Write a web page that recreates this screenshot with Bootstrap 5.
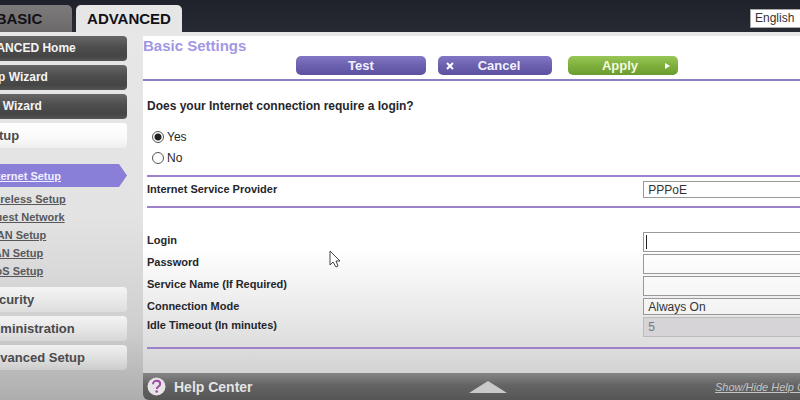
<!DOCTYPE html>
<html lang="en">
<head>
<meta charset="utf-8">
<meta name="viewport" content="width=device-width, initial-scale=1">
<title>Basic Settings</title>
<link href="https://cdn.jsdelivr.net/npm/bootstrap@5.3.0/dist/css/bootstrap.min.css" rel="stylesheet">
<style>
body { font-family: "Liberation Sans", Arial, sans-serif; font-size: 12px; line-height: 16px; color: #26262b; background: #e6e6e7; overflow: hidden; }
.topbar { height: 32px; background: linear-gradient(#20222b, #272a32); }
.toptab { height: 27px; font-size: 15px; font-weight: 700; line-height: 27px; color: #111116; text-decoration: none; border-radius: 5px 5px 0 0; text-align: center; }
.tab-basic { width: 120px; margin-left: -48px; padding-left: 14px; background: linear-gradient(#7c7a7b, #6b696a); }
.tab-advanced { width: 106px; background: #e6e6e7; }
.language { width: 50px; height: 19px; font-size: 12px; line-height: 16px; padding: 0 4px; border: 1px solid #aaa; border-right: 0; border-radius: 0; appearance: none; background: #fff; color: #333; }
.shell { background: linear-gradient(#e8e7e8 0, #e3e3e3 50%, #cfcfd0 80%, #adadae 100%); }
.side { width: 183px; margin-left: -40px; padding-right: 16px; }
.menu-btn { height: 25px; border: 0; border-radius: 0 4px 4px 0; font-size: 13px; font-weight: 700; line-height: 25px; text-align: left; padding: 0 12px; }
.menu-dark { font-size: 12px; color: #f4f4f4; background: linear-gradient(#686768, #4e4d4e 45%, #464546 80%, #555); }
.menu-light { color: #4a4a4c; background: linear-gradient(rgba(255,255,255,.75), rgba(255,255,255,.45) 60%, rgba(255,255,255,.25)); padding-left: 23px; }
.menu-open { background: linear-gradient(#fff, #fafafa 60%, #eee); }
.submenu { font-size: 11px; font-weight: 700; line-height: 18px; padding: 12px 0 3px; }
.submenu a { color: #58585a; padding-left: 27px; }
.submenu .current { color: #f0eeff; height: 23px; line-height: 24px; margin-bottom: 3px; background: #897fd8; clip-path: polygon(0 0, calc(100% - 8px) 0, 100% 50%, calc(100% - 8px) 100%, 0 100%); }
.panel { background: linear-gradient(#fff 0, #fff 63%, #efefef 77%, #dcdcdd 93%, #d3d3d3 100%); }
.page-title { font-size: 15px; font-weight: 700; line-height: 20px; color: #a198e4; }
.actions { padding: 0 0 4px 153px; border-bottom: 2px solid #8c80c4; gap: 12px; }
.action { height: 19px; border: 0; border-radius: 5px; font-size: 13px; font-weight: 700; line-height: 19px; color: #f3f1ff; background: linear-gradient(#8177c4, #6b61af 50%, #5b519e); padding: 0 8px; }
.action-test { width: 130px; }
.action-cancel { width: 114px; }
.action-apply { width: 110px; color: #f1fae0; background: linear-gradient(#99c656, #7fb03d 50%, #6a9b31); }
.question { font-size: 12px; font-weight: 700; line-height: 16px; margin-bottom: 12px; }
.choices { padding: 17px 0 7px; }
.choice { height: 21px; gap: 3px; padding-left: 5px; }
.choice input { appearance: none; width: 12px; height: 12px; margin: 0; border: 1px solid #555; border-radius: 50%; background: #fff; }
.choice input:checked { background: radial-gradient(circle, #222 0 3px, #fff 4px); }
.ruled { border-top: 2px solid #9c82cc; }
.settings { padding: 24px 0 10px; row-gap: 2px; }
.field-label { width: 76%; font-size: 11px; font-weight: 700; line-height: 16px; }
.field { width: 24%; }
.box { width: 100%; height: 20px; border: 1px solid #999; border-right: 0; border-radius: 0; padding: 0 4px; font-size: 12px; line-height: 14px; color: #333; background: rgba(255,255,255,.45); appearance: none; }
.box-select { height: 17px; }
.box:disabled { color: #77777a; background: #d6d4d6; border-color: #bbb; opacity: 1; }
.caret { left: 3px; top: 3px; width: 1px; height: 14px; background: #222; }
.pointer { left: 186px; top: 214px; }
.helpbar { height: 27px; border-bottom-left-radius: 6px; background: linear-gradient(#858585, #646464 45%, #555); color: #e4e4e4; }
.help-title { font-size: 14px; font-weight: 700; }
.help-link { font-size: 11px; font-style: italic; color: #c4c4c4; width: 85px; }
</style>
</head>
<body class="min-vh-100 d-flex flex-column">
<header class="topbar d-flex align-items-end">
  <a href="#" class="toptab tab-basic">BASIC</a>
  <a href="#" class="toptab tab-advanced ms-1">ADVANCED</a>
  <select class="language ms-auto align-self-center mt-1" aria-label="Language"><option>English</option></select>
</header>
<div class="shell d-flex flex-grow-1">
  <nav class="side flex-shrink-0 d-flex flex-column gap-1 pt-1">
    <button type="button" class="menu-btn menu-dark">ADVANCED Home</button>
    <button type="button" class="menu-btn menu-dark">Setup Wizard</button>
    <button type="button" class="menu-btn menu-dark">WPS Wizard</button>
    <button type="button" class="menu-btn menu-light menu-open">Setup</button>
    <div class="submenu d-flex flex-column">
      <a href="#" class="current">Internet Setup</a>
      <a href="#">Wireless Setup</a>
      <a href="#">Guest Network</a>
      <a href="#">WAN Setup</a>
      <a href="#">LAN Setup</a>
      <a href="#">QoS Setup</a>
    </div>
    <button type="button" class="menu-btn menu-light">Security</button>
    <button type="button" class="menu-btn menu-light">Administration</button>
    <button type="button" class="menu-btn menu-light">Advanced Setup</button>
  </nav>
  <div class="flex-grow-1 d-flex flex-column pt-1">
    <main class="panel flex-grow-1 position-relative">
      <h1 class="page-title m-0">Basic Settings</h1>
      <div class="actions d-flex">
        <button type="button" class="action action-test">Test</button>
        <button type="button" class="action action-cancel d-flex align-items-center">
          <svg width="8" height="8" viewBox="0 0 8 8" aria-hidden="true"><path d="M1 1l6 6M7 1L1 7" stroke="#fff" stroke-width="2"/></svg>
          <span class="flex-grow-1">Cancel</span>
        </button>
        <button type="button" class="action action-apply ms-1 d-flex align-items-center">
          <span class="flex-grow-1">Apply</span>
          <svg width="6" height="8" viewBox="0 0 6 8" aria-hidden="true"><path d="M1 1l5 3-5 3z" fill="#fff"/></svg>
        </button>
      </div>
      <form class="ps-1">
        <fieldset class="choices">
          <legend class="question">Does your Internet connection require a login?</legend>
          <div class="choice d-flex align-items-center"><input type="radio" name="login-required" id="yes" checked><label for="yes">Yes</label></div>
          <div class="choice d-flex align-items-center"><input type="radio" name="login-required" id="no"><label for="no">No</label></div>
        </fieldset>
        <div class="ruled d-flex pt-1 pb-2">
          <label class="field-label" for="isp">Internet Service Provider</label>
          <div class="field"><select class="box box-select" id="isp"><option>PPPoE</option></select></div>
        </div>
        <div class="settings ruled d-grid">
          <div class="d-flex"><label class="field-label" for="login">Login</label><div class="field position-relative"><input class="box" id="login" type="text"><span class="caret position-absolute"></span></div></div>
          <div class="d-flex"><label class="field-label" for="password">Password</label><div class="field"><input class="box" id="password" type="password"></div></div>
          <div class="d-flex"><label class="field-label" for="service">Service Name (If Required)</label><div class="field"><input class="box" id="service" type="text"></div></div>
          <div class="d-flex"><label class="field-label" for="mode">Connection Mode</label><div class="field"><select class="box box-select" id="mode"><option>Always On</option></select></div></div>
          <div class="d-flex"><label class="field-label" for="idle">Idle Timeout (In minutes)</label><div class="field"><input class="box" id="idle" type="text" value="5" disabled></div></div>
        </div>
        <div class="ruled"></div>
      </form>
      <svg class="pointer position-absolute" width="12" height="19" viewBox="0 0 12 19" aria-hidden="true"><path d="M1 1v14l3-3 3 5 2-1-2-5h4z" fill="#fff" stroke="#444" stroke-width="1"/></svg>
    </main>
    <footer class="helpbar d-flex align-items-center ps-1">
      <svg width="19" height="19" viewBox="0 0 19 19" aria-hidden="true"><circle cx="9.500" cy="9.500" r="9" fill="#e8e4e8"/><path d="M6 7.200c0-4.600 7.200-4.300 7.200-.3 0 2.500-3.400 2.600-3.400 5" fill="none" stroke="#a04aa3" stroke-width="2"/><circle cx="9.700" cy="14.500" r="1.300" fill="#a04aa3"/></svg>
      <span class="help-title ms-2 pe-2">Help Center</span>
      <svg class="mx-auto" width="38" height="12" viewBox="0 0 38 12" aria-hidden="true"><path d="M0 12L19 0l19 12z" fill="#c9c9c9"/></svg>
      <a href="#" class="help-link text-nowrap">Show/Hide Help Center</a>
    </footer>
  </div>
</div>
<script src="https://cdn.jsdelivr.net/npm/bootstrap@5.3.0/dist/js/bootstrap.bundle.min.js"></script>
</body>
</html>
